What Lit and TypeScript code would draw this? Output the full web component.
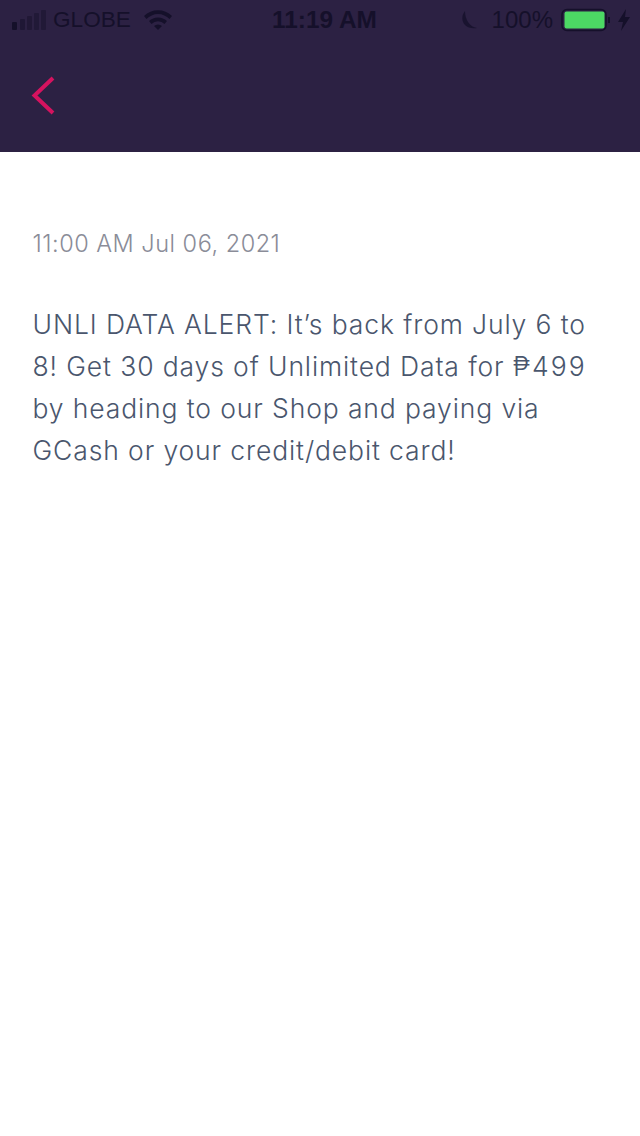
import { LitElement, html, css } from "lit";
import { customElement } from "lit/decorators.js";

@customElement("app-root")
export class AppRoot extends LitElement {
  static styles = css`
    :host { display: block; height: 1136px; background: #fff; font-family: Inter, "Liberation Sans", sans-serif; }
    .top { background: #2c2143; height: 152px; box-sizing: border-box; }
    .status { height: 40px; display: grid; grid-template-columns: 1fr auto 1fr; align-items: center; padding: 0 9px 0 12px; color: #15102a; font-family: "Liberation Sans", sans-serif; }
    .left, .right { display: flex; align-items: center; }
    .left { gap: 5px; }
    .right { justify-content: flex-end; }
    .time { font-weight: 700; font-size: 24.4px; margin-left: 6px; }
    .carrier { font-size: 22.6px; }
    .pct { font-size: 24px; margin-left: 14px; }
    .batt { margin-left: 8px; }
    .wifi { margin-left: 7px; }
    .nav { height: 112px; padding: 0 0 0 31px; display: flex; align-items: center; }
    .nav svg { display: block; }
    .content { padding: 77px 32px 0 32.5px; }
    .date { font-size: 23.5px; line-height: 30px; color: #8a8c98; letter-spacing: 0.5px; font-weight: 350; }
    .msg { margin: 44px 0 0; font-size: 26.5px; line-height: 42px; color: #4a566d; letter-spacing: 0.88px; font-weight: 350; white-space: nowrap; }
    .price { letter-spacing: 2px; }
  `;
  render() {
    return html`
      <div class="top">
        <div class="status">
          <div class="left">
            <svg width="36" height="22" viewBox="0 0 36 22">
              <rect x="0" y="13" width="5" height="8" rx="1" fill="#15102a"/>
              <rect x="8" y="10" width="5" height="11" rx="1" fill="#15102a" opacity=".55"/>
              <rect x="15" y="7" width="5" height="14" rx="1" fill="#15102a" opacity=".5"/>
              <rect x="22" y="4" width="5" height="17" rx="1" fill="#15102a" opacity=".45"/>
              <rect x="29" y="1" width="5" height="20" rx="1" fill="#15102a" opacity=".45"/>
            </svg>
            <span class="carrier">GLOBE</span>
            <svg class="wifi" width="30" height="22" viewBox="0 0 30 22">
              <path d="M1 7 A20 20 0 0 1 29 7 L26.500 10 A16 16 0 0 0 3.500 10Z" fill="#15102a"/>
              <path d="M6 12 A13 13 0 0 1 24 12 L21.500 15 A9 9 0 0 0 8.500 15Z" fill="#15102a"/>
              <path d="M11 17 A6 6 0 0 1 19 17 L15 21Z" fill="#15102a"/>
            </svg>
          </div>
          <div class="time">11:19 AM</div>
          <div class="right">
            <svg width="18" height="22" viewBox="0 0 18 22">
              <path d="M5 2 C-1 9 3 21 17 19 C10 18 5 11 5 2Z" fill="#15102a" opacity=".8"/>
            </svg>
            <span class="pct">100%</span>
            <svg class="batt" width="56" height="24" viewBox="0 0 56 24">
              <rect x="1" y="1.500" width="44" height="21" rx="5" fill="none" stroke="#15102a" stroke-width="1.500"/>
              <rect x="3.500" y="3.500" width="40" height="17" rx="2" fill="#4cd964"/>
              <rect x="47" y="9" width="2" height="6" fill="#15102a"/>
            </svg>
            <svg width="14" height="24" viewBox="0 0 14 24">
              <path d="M9 1 L1 14 H6 L4 23 L13 9 H8Z" fill="#15102a"/>
            </svg>
          </div>
        </div>
        <div class="nav">
          <svg width="24" height="40" viewBox="0 0 24 40">
            <path d="M22 2 L3.500 19.500 L22 37" fill="none" stroke="#d5135f" stroke-width="4"/>
          </svg>
        </div>
      </div>
      <div class="content">
        <div class="date">11:00 AM Jul 06, 2021</div>
        <p class="msg">UNLI DATA ALERT: It’s back from July 6 to<br>8! Get 30 days of Unlimited Data for <span class="price">₱499</span><br>by heading to our Shop and paying via<br>GCash or your credit/debit card!</p>
      </div>
    `;
  }
}
